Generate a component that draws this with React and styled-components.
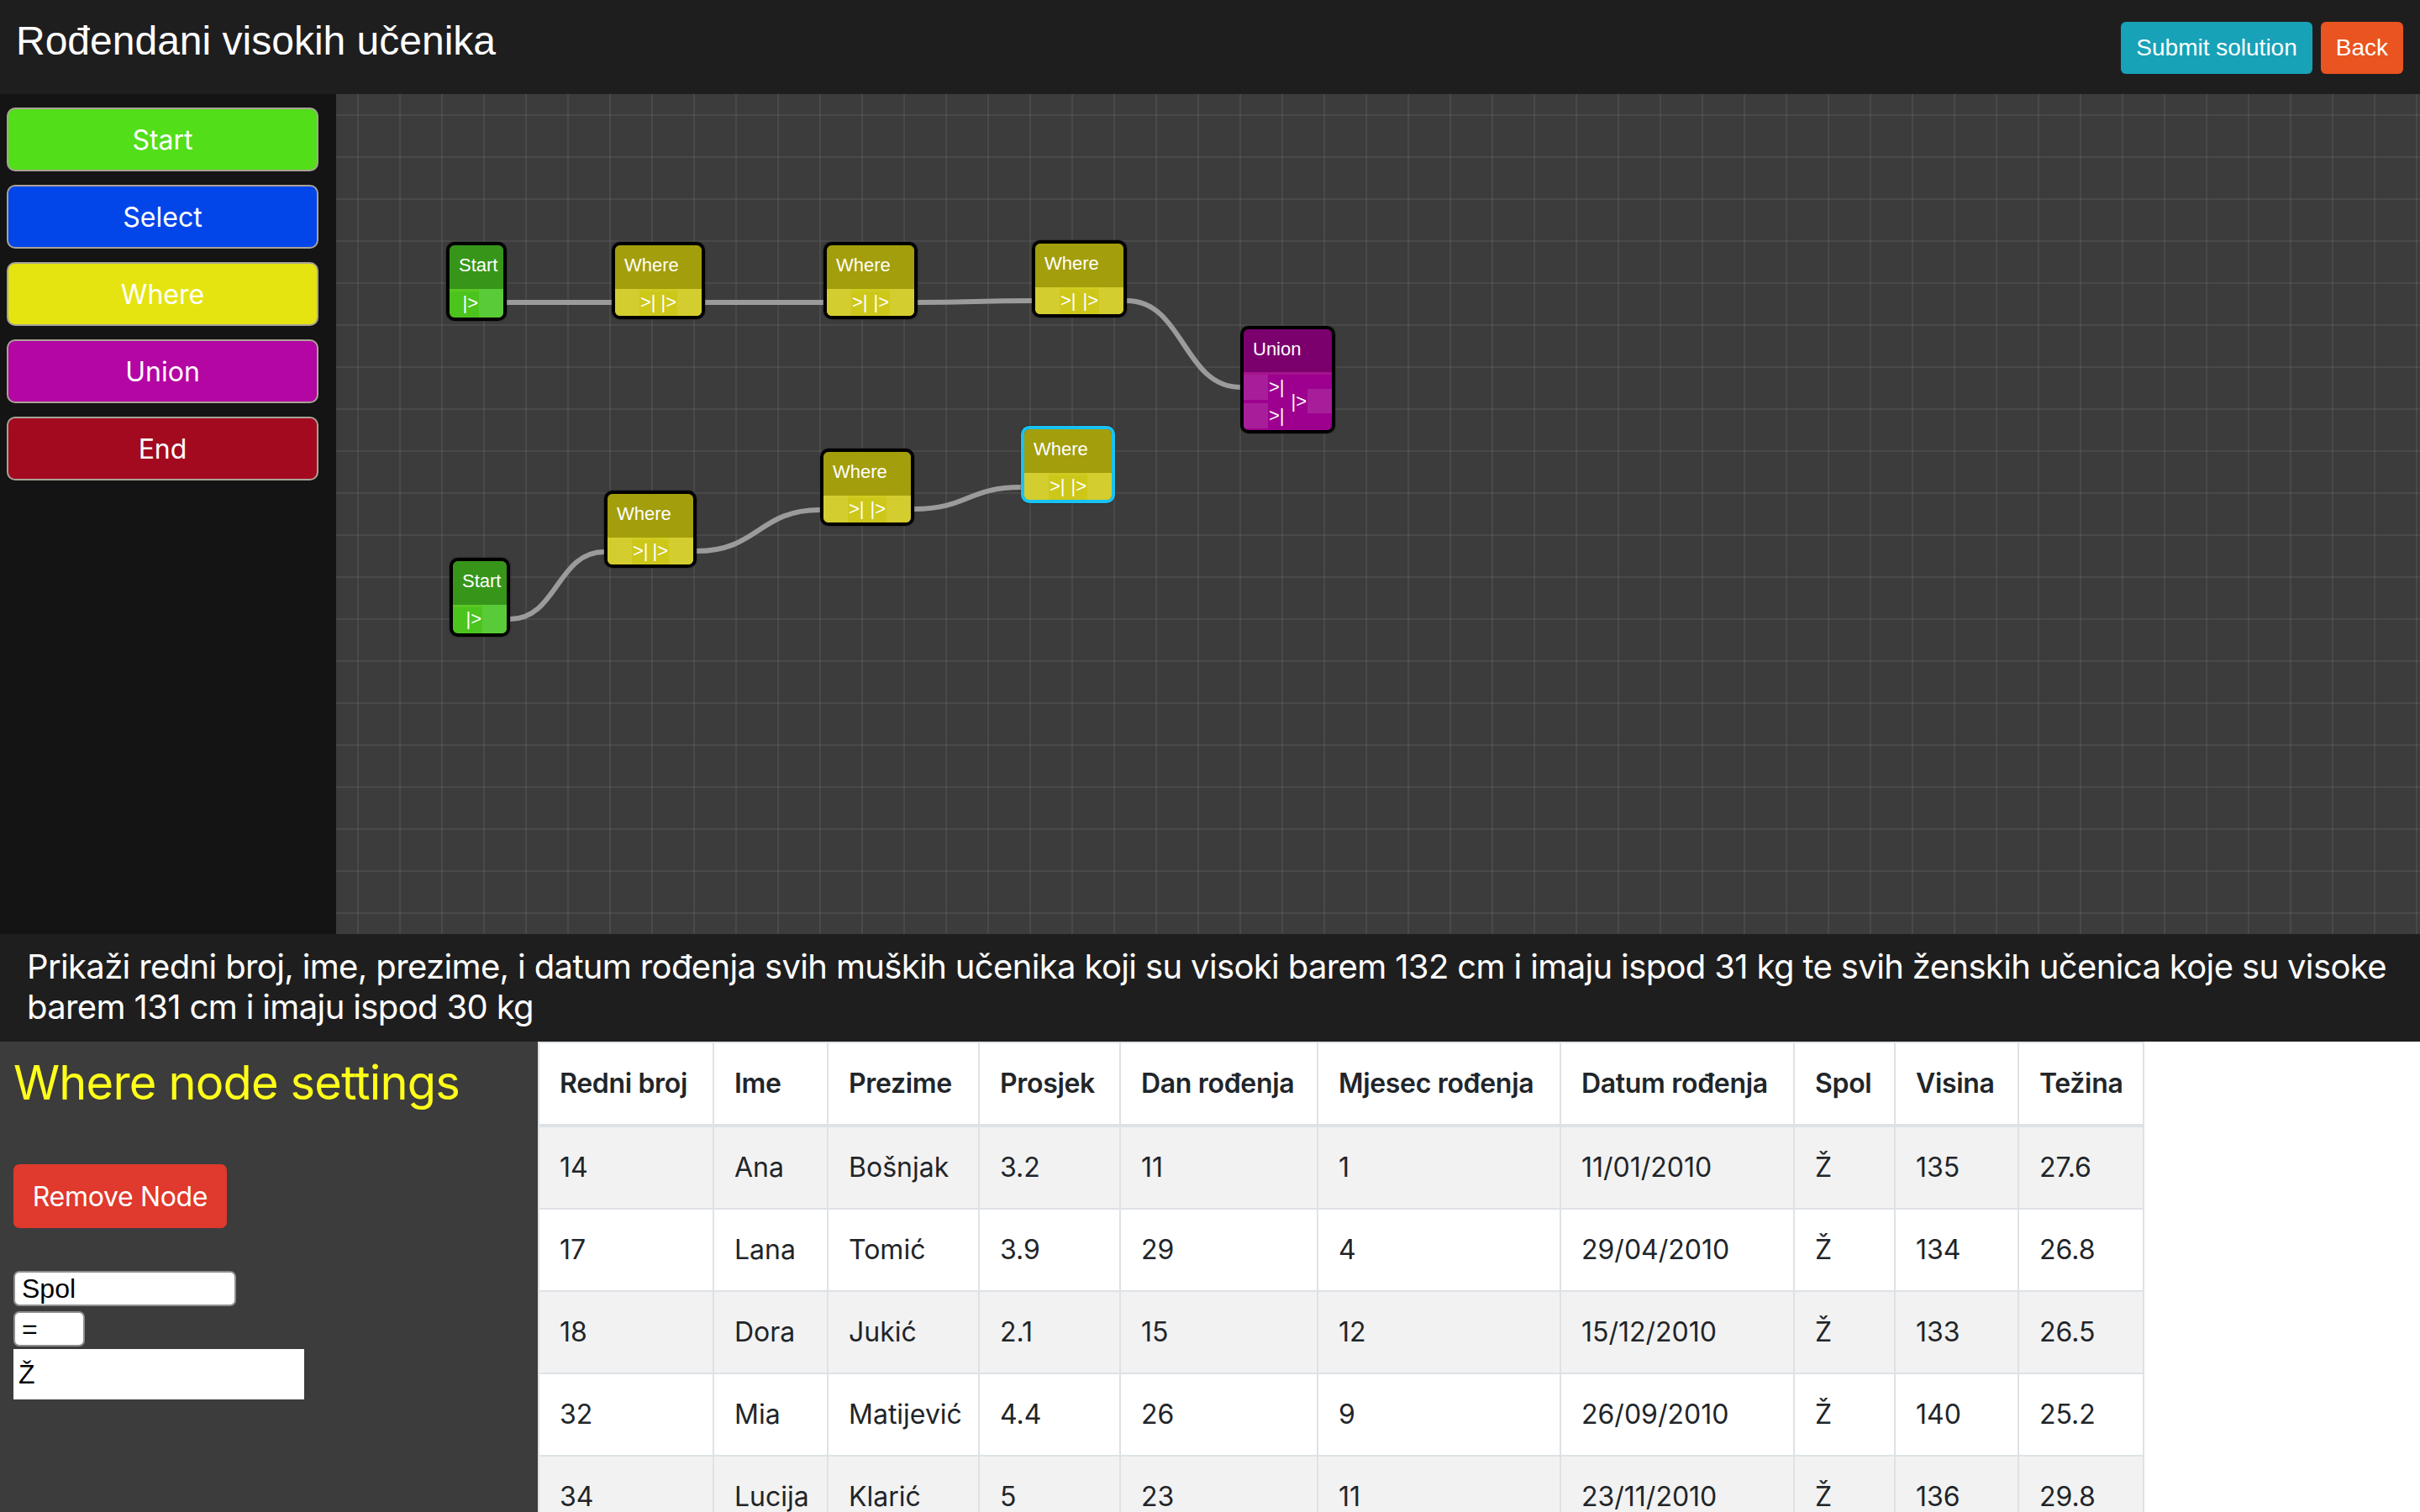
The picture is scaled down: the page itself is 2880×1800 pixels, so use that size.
import React from 'react';
import styled, { createGlobalStyle, css } from 'styled-components';

const GlobalStyle = createGlobalStyle`
  html, body {
    margin: 0;
    padding: 0;
    background: #ffffff;
  }
  body {
    font-family: Inter, "Noto Sans", sans-serif;
  }
  * {
    box-sizing: border-box;
  }
`;

const CANVAS_X = 400;
const CANVAS_Y = 112;

const NODE_COLORS = {
    start: { title: '#37961a', body: '#4cc41e', port: '#5acb38' },
    where: { title: '#a39e0b', body: '#cdc71a', port: '#d3cd2f' },
    union: { title: '#7b006d', body: '#9d008f', port: '#a71e9a' },
};

const nodes = [
    { id: 's1', type: 'start', title: 'Start', x: 531, y: 288, w: 72, h: 94 },
    { id: 'w1', type: 'where', title: 'Where', x: 728, y: 288, w: 111, h: 92 },
    { id: 'w2', type: 'where', title: 'Where', x: 980, y: 288, w: 112, h: 92 },
    { id: 'w3', type: 'where', title: 'Where', x: 1228, y: 286, w: 113, h: 92 },
    { id: 'u1', type: 'union', title: 'Union', x: 1476, y: 388, w: 113, h: 128 },
    { id: 's2', type: 'start', title: 'Start', x: 535, y: 664, w: 72, h: 94 },
    { id: 'w4', type: 'where', title: 'Where', x: 719, y: 584, w: 110, h: 92 },
    { id: 'w5', type: 'where', title: 'Where', x: 976, y: 534, w: 112, h: 92 },
    { id: 'w6', type: 'where', title: 'Where', x: 1215, y: 507, w: 112, h: 92, selected: true },
];

const links = [
    [603, 360, 728, 360],
    [839, 360, 980, 360],
    [1092, 360, 1228, 358],
    [1341, 358, 1476, 461],
    [607, 737, 719, 657],
    [829, 656, 976, 607],
    [1088, 606, 1215, 580],
];

const rows = [
    ['14', 'Ana', 'Bošnjak', '3.2', '11', '1', '11/01/2010', 'Ž', '135', '27.6'],
    ['17', 'Lana', 'Tomić', '3.9', '29', '4', '29/04/2010', 'Ž', '134', '26.8'],
    ['18', 'Dora', 'Jukić', '2.1', '15', '12', '15/12/2010', 'Ž', '133', '26.5'],
    ['32', 'Mia', 'Matijević', '4.4', '26', '9', '26/09/2010', 'Ž', '140', '25.2'],
    ['34', 'Lucija', 'Klarić', '5', '23', '11', '23/11/2010', 'Ž', '136', '29.8'],
];

const columns = [
    ['Redni broj', 208],
    ['Ime', 136],
    ['Prezime', 180],
    ['Prosjek', 168],
    ['Dan rođenja', 235],
    ['Mjesec rođenja', 289],
    ['Datum rođenja', 278],
    ['Spol', 120],
    ['Visina', 147],
    ['Težina', 149],
];

const palette = [
    ['Start', '#52de19'],
    ['Select', '#0246ea'],
    ['Where', '#e6e410'],
    ['Union', '#b306a3'],
    ['End', '#a30a20'],
];

const Page = styled.div`
    height: 100vh;
    display: flex;
    flex-direction: column;
    overflow: hidden;
`;

const TopBar = styled.header`
    height: 112px;
    flex-shrink: 0;
    background: #1e1e1e;
    display: flex;
    align-items: flex-start;
    justify-content: space-between;
    padding: 0 20px 0 19px;
    font-family: "Liberation Sans", Arial, sans-serif;
`;

const Title = styled.h1`
    margin: 0;
    padding-top: 21px;
    font-size: 48px;
    line-height: 56px;
    font-weight: 400;
    color: #ffffff;
`;

const TopActions = styled.div`
    display: flex;
    gap: 10px;
    padding-top: 26px;
`;

const TopButton = styled.button`
    height: 62px;
    padding: 0 18px;
    border: none;
    border-radius: 6px;
    background: ${p => p.$bg};
    color: #ffffff;
    font-family: "Liberation Sans", Arial, sans-serif;
    font-size: 28px;
    cursor: pointer;
`;

const Workspace = styled.div`
    height: 1000px;
    flex-shrink: 0;
    display: flex;
`;

const Palette = styled.aside`
    width: 400px;
    flex-shrink: 0;
    background: #141414;
    padding: 16px 0 0 8px;
    display: flex;
    flex-direction: column;
    gap: 16px;
`;

const PaletteButton = styled.button`
    width: 371px;
    height: 76px;
    border: 2px solid #a9a396;
    border-radius: 10px;
    background: ${p => p.$bg};
    color: #ffffff;
    font-family: Inter, "Noto Sans", sans-serif;
    font-size: 32px;
    cursor: pointer;
`;

const Canvas = styled.main`
    flex: 1;
    position: relative;
    overflow: hidden;
    background-color: #3c3c3c;
    background-image:
        linear-gradient(to right, rgba(255, 255, 255, 0.065) 2px, transparent 2px),
        linear-gradient(to bottom, rgba(255, 255, 255, 0.065) 2px, transparent 2px);
    background-size: 50px 50px;
    background-position: 25px 24px;
`;

const Wires = styled.svg`
    position: absolute;
    inset: 0;
    width: 100%;
    height: 100%;
    pointer-events: none;
`;

const NodeBox = styled.div.attrs(p => ({
    style: { left: p.$x - CANVAS_X, top: p.$y - CANVAS_Y, width: p.$w, height: p.$h },
}))`
    position: absolute;
    display: flex;
    flex-direction: column;
    border: 4px solid ${p => (p.$selected ? '#19c2f2' : '#000000')};
    border-radius: 10px;
    overflow: hidden;
    font-family: "Liberation Sans", Arial, sans-serif;
    color: #ffffff;
    box-shadow: 0 0 2px rgba(0, 0, 0, 0.6);
`;

const NodeTitle = styled.div`
    height: ${p => (p.$tall ? 51 : 52)}px;
    flex-shrink: 0;
    background: ${p => p.$bg};
    padding: 11px 0 0 11px;
    font-size: 22px;
    line-height: 26px;
    white-space: nowrap;
`;

const NodePorts = styled.div`
    flex: 1;
    display: flex;
    align-items: center;
    justify-content: ${p => (p.$end ? 'flex-end' : 'space-between')};
    background: ${p => p.$bg};
    box-shadow: inset 0 3px 0 rgba(255, 255, 120, 0.08);
`;

const PortColumn = styled.div`
    display: flex;
    flex-direction: column;
    gap: 4px;
    ${p => p.$fill && css`
        align-self: stretch;
        justify-content: center;
    `}
`;

const Port = styled.div`
    display: flex;
    align-items: center;
    gap: 1px;
    flex-direction: ${p => (p.$out ? 'row-reverse' : 'row')};
`;

const PortSocket = styled.div`
    width: 29px;
    height: ${p => p.$h}px;
    background: ${p => p.$bg};
`;

const PortLabel = styled.span`
    font-size: 22px;
    line-height: 26px;
    white-space: nowrap;
`;

const TaskBar = styled.section`
    flex-shrink: 0;
    background: #1e1e1e;
    color: #ffffff;
    padding: 15px 24px 17px 32px;
    font-size: 40px;
    line-height: 48px;
    letter-spacing: -0.016em;
`;

const Lower = styled.div`
    flex: 1;
    min-height: 0;
    display: flex;
    overflow: hidden;
`;

const Settings = styled.div`
    width: 640px;
    flex-shrink: 0;
    background: #3c3c3c;
    padding: 16px 16px 0 16px;
    display: flex;
    flex-direction: column;
    align-items: flex-start;
`;

const SettingsTitle = styled.h3`
    margin: 0;
    font-size: 56px;
    line-height: 67px;
    font-weight: 400;
    letter-spacing: -0.015em;
    color: #ffff1a;
`;

const RemoveButton = styled.button`
    margin-top: 63px;
    width: 254px;
    height: 76px;
    border: none;
    border-radius: 7px;
    background: #e0392d;
    color: #ffffff;
    font-family: Inter, "Noto Sans", sans-serif;
    font-size: 32px;
    letter-spacing: -0.01em;
    cursor: pointer;
`;

const Fields = styled.div`
    margin-top: 51px;
    display: flex;
    flex-direction: column;
    align-items: flex-start;
`;

const Field = styled.div`
    width: ${p => p.$w}px;
    height: ${p => p.$h}px;
    margin-bottom: ${p => p.$gap || 0}px;
    background: #ffffff;
    color: #000000;
    border: ${p => (p.$plain ? 'none' : '2px solid #8e8e8e')};
    border-radius: ${p => (p.$plain ? 0 : 7)}px;
    padding: 0 ${p => (p.$plain ? 6 : 8)}px;
    display: flex;
    align-items: center;
    font-family: "Liberation Sans", Arial, sans-serif;
    font-size: 32px;
`;

const TableArea = styled.div`
    flex: 1;
    background: #ffffff;
    overflow: hidden;
`;

const Table = styled.table`
    width: 1910px;
    table-layout: fixed;
    border-collapse: collapse;
    color: #212529;
    font-size: 32px;
    line-height: 48px;
    border-top: 2px solid #dee2e6;
`;

const HeadCell = styled.th`
    text-align: left;
    font-weight: 600;
    padding: 24px;
    border: 2px solid #dee2e6;
    border-top: none;
    border-bottom: 4px solid #dee2e6;
    white-space: nowrap;
    letter-spacing: -0.01em;
`;

const BodyRow = styled.tr`
    background: ${p => (p.$odd ? '#f2f2f2' : '#ffffff')};
`;

const Cell = styled.td`
    padding: 24px;
    border: 2px solid #dee2e6;
    white-space: nowrap;
`;

function EditorNode({ node }) {
    const c = NODE_COLORS[node.type];
    let ports;
    if (node.type === 'start') {
        ports = (
            <Port $out>
                <PortSocket $bg={c.port} $h={34} />
                <PortLabel>|&gt;</PortLabel>
            </Port>
        );
    } else if (node.type === 'where') {
        ports = (
            <>
                <Port>
                    <PortSocket $bg={c.port} $h={32} />
                    <PortLabel>&gt;|</PortLabel>
                </Port>
                <Port $out>
                    <PortSocket $bg={c.port} $h={32} />
                    <PortLabel>|&gt;</PortLabel>
                </Port>
            </>
        );
    } else {
        ports = (
            <>
                <PortColumn>
                    <Port>
                        <PortSocket $bg={c.port} $h={30} />
                        <PortLabel>&gt;|</PortLabel>
                    </Port>
                    <Port>
                        <PortSocket $bg={c.port} $h={30} />
                        <PortLabel>&gt;|</PortLabel>
                    </Port>
                </PortColumn>
                <Port $out>
                    <PortSocket $bg={c.port} $h={29} />
                    <PortLabel>|&gt;</PortLabel>
                </Port>
            </>
        );
    }
    return (
        <NodeBox $x={node.x} $y={node.y} $w={node.w} $h={node.h} $selected={node.selected}>
            <NodeTitle $bg={c.title} $tall={node.type === 'union'}>{node.title}</NodeTitle>
            <NodePorts $bg={c.body} $end={node.type === 'start'}>{ports}</NodePorts>
        </NodeBox>
    );
}

function wirePath([x1, y1, x2, y2]) {
    const ax = x1 - CANVAS_X, ay = y1 - CANVAS_Y;
    const bx = x2 - CANVAS_X, by = y2 - CANVAS_Y;
    const d = Math.abs(bx - ax) * 0.5;
    return `M ${ax} ${ay} C ${ax + d} ${ay}, ${bx - d} ${by}, ${bx} ${by}`;
}

export default function App() {
    return (
        <Page>
            <GlobalStyle />
            <TopBar>
                <Title>Rođendani visokih učenika</Title>
                <TopActions>
                    <TopButton $bg="#17a2b8">Submit solution</TopButton>
                    <TopButton $bg="#e95420">Back</TopButton>
                </TopActions>
            </TopBar>

            <Workspace>
                <Palette>
                    {palette.map(([label, bg]) => (
                        <PaletteButton key={label} $bg={bg}>{label}</PaletteButton>
                    ))}
                </Palette>
                <Canvas>
                    <Wires>
                        {links.map((l, i) => (
                            <path key={i} d={wirePath(l)} stroke="#9b9b9b" strokeWidth="6" fill="none" />
                        ))}
                    </Wires>
                    {nodes.map(n => <EditorNode key={n.id} node={n} />)}
                </Canvas>
            </Workspace>

            <TaskBar>
                Prikaži redni broj, ime, prezime, i datum rođenja svih muških učenika koji su visoki barem 132 cm i imaju ispod 31 kg te svih ženskih učenica koje su visoke barem 131 cm i imaju ispod 30 kg
            </TaskBar>

            <Lower>
                <Settings>
                    <SettingsTitle>Where node settings</SettingsTitle>
                    <RemoveButton>Remove Node</RemoveButton>
                    <Fields>
                        <Field $w={265} $h={42} $gap={6}>Spol</Field>
                        <Field $w={85} $h={42} $gap={3}>=</Field>
                        <Field $w={346} $h={60} $plain>Ž</Field>
                    </Fields>
                </Settings>
                <TableArea>
                    <Table>
                        <colgroup>
                            {columns.map(([name, w]) => <col key={name} style={{ width: w }} />)}
                        </colgroup>
                        <thead>
                            <tr>
                                {columns.map(([name]) => <HeadCell key={name}>{name}</HeadCell>)}
                            </tr>
                        </thead>
                        <tbody>
                            {rows.map((r, i) => (
                                <BodyRow key={r[0]} $odd={i % 2 === 0}>
                                    {r.map((v, j) => <Cell key={j}>{v}</Cell>)}
                                </BodyRow>
                            ))}
                        </tbody>
                    </Table>
                </TableArea>
            </Lower>
        </Page>
    );
}
